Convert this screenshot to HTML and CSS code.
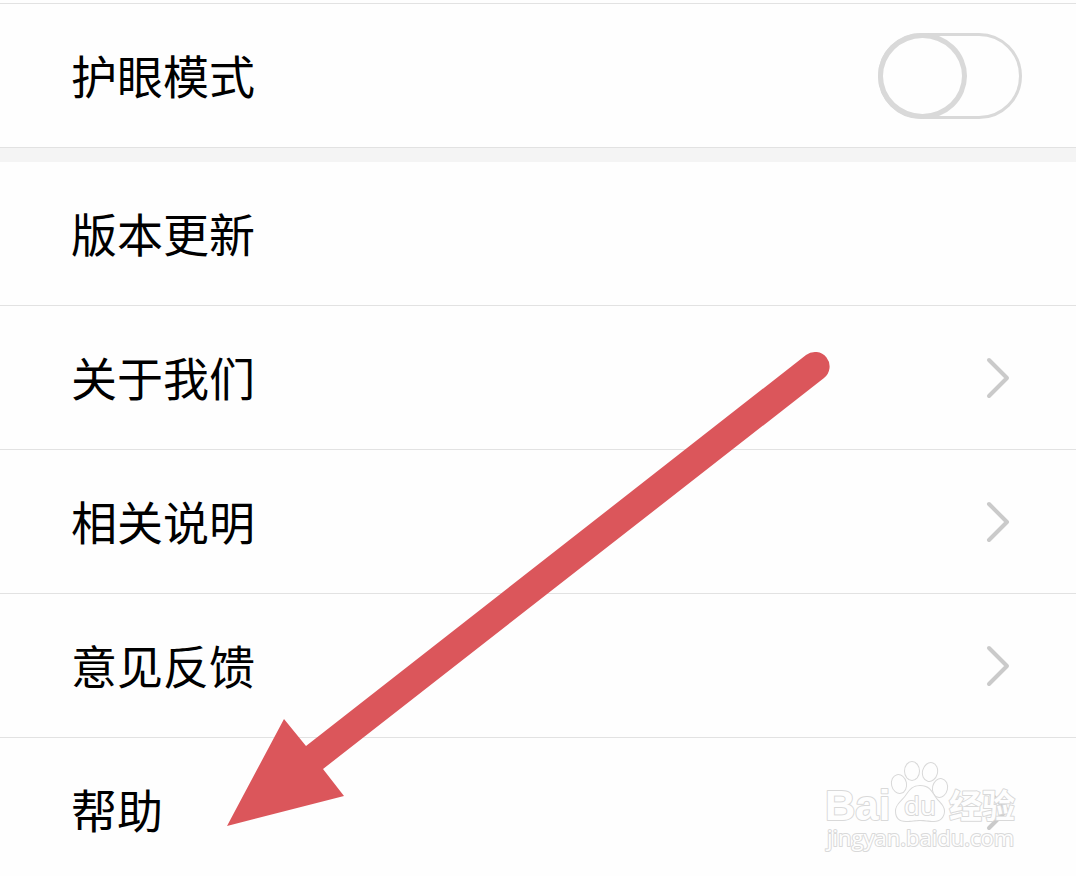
FILE: index.html
```
<!DOCTYPE html>
<html lang="zh-CN">
<head>
    <meta charset="UTF-8">
    <meta name="viewport" content="width=device-width, initial-scale=1.0">
    <title>设置</title>
    <link rel="stylesheet" href="styles.css">
</head>
<body>
    <main class="settings">
        <section class="group">
            <div class="row">
                <label for="eyeMode">护眼模式</label>
                <input type="checkbox" id="eyeMode" class="switch">
            </div>
        </section>

        <section class="group">
            <a href="#update" class="row">版本更新</a>
            <a href="#about" class="row">关于我们
                <svg class="chevron" viewBox="0 0 24 42" aria-hidden="true"><path d="M3 3L21 21L3 39"/></svg>
            </a>
            <a href="#notes" class="row">相关说明
                <svg class="chevron" viewBox="0 0 24 42" aria-hidden="true"><path d="M3 3L21 21L3 39"/></svg>
            </a>
            <a href="#feedback" class="row">意见反馈
                <svg class="chevron" viewBox="0 0 24 42" aria-hidden="true"><path d="M3 3L21 21L3 39"/></svg>
            </a>
            <a href="#help" class="row">帮助
                <svg class="chevron" viewBox="0 0 24 42" aria-hidden="true"><path d="M3 3L21 21L3 39"/></svg>
            </a>
        </section>

        <!-- Arrow pointing at the help row -->
        <svg class="arrow" viewBox="220 345 620 490" aria-hidden="true">
            <path d="M227 826L284 719L306 746L806 355A14.500 14.500 0 0 1 824 378L323 769L344 796Z"/>
        </svg>

        <!-- Baidu watermark -->
        <svg class="watermark" viewBox="820 755 204 105">
            <text class="wm-bai" x="825" y="820">Bai</text>
            <g>
                <ellipse cx="899" cy="784" rx="7" ry="9" transform="rotate(-12 899 784)"/>
                <ellipse cx="912" cy="771" rx="7" ry="9"/>
                <ellipse cx="930" cy="772" rx="7" ry="9" transform="rotate(14 930 772)"/>
                <ellipse cx="940" cy="788" rx="7" ry="9" transform="rotate(12 940 788)"/>
                <path d="M920 786C911 786 909 792 905 797C901 802 896 805 896 811C896 818 900 821 906 821C912 821 915 820 920 820C925 820 928 821 934 821C940 821 944 817 944 811C944 805 938 802 935 797C931 791 929 786 920 786Z"/>
            </g>
            <text class="wm-du" x="904" y="815">du</text>
            <text class="wm-cn" x="949" y="818">经验</text>
            <text class="wm-url" x="827" y="846">jingyan.baidu.com</text>
        </svg>
    </main>
</body>
</html>
```

FILE: styles.css
```
body {
    margin: 0;
    padding-top: 3px;
    background-color: #fefefe;
    color: #000;
    font-family: "Noto Sans CJK SC", sans-serif;
}
.settings {
    position: relative;
}
.group {
    border-top: 1px solid #e2e2e2;
}
.group + .group {
    border-top: 14px solid #f4f4f4;
}
.row {
    display: flex;
    align-items: center;
    justify-content: space-between;
    padding: 37px 66px 40px 71px;
    border-bottom: 1px solid #e2e2e2;
    color: inherit;
    font-size: 46px;
    line-height: 66px;
    text-decoration: none;
}
.group + .group .row:last-child {
    padding-bottom: 34px;
    border-bottom: none;
}
.switch {
    appearance: none;
    box-sizing: border-box;
    width: 144px;
    height: 86px;
    margin: -8px -12px -12px 0;
    border: 3px solid #d9d9d9;
    border-radius: 43px;
    background-color: #fefefe;
    cursor: pointer;
}
.switch::before {
    content: "";
    display: block;
    box-sizing: border-box;
    width: 89px;
    height: 86px;
    margin: -3px;
    border: 5px solid #d9d9d9;
    border-radius: 50%;
}
.switch:checked::before {
    margin-left: 52px;
}
.chevron {
    width: 24px;
    height: 42px;
    margin-top: 4px;
    fill: none;
    stroke: #cacaca;
    stroke-width: 4;
    stroke-linecap: round;
    stroke-linejoin: round;
}
.arrow {
    position: absolute;
    left: 220px;
    top: 342px;
    width: 620px;
    height: 490px;
    fill: #db565b;
    pointer-events: none;
}
.watermark {
    position: absolute;
    right: 52px;
    top: 752px;
    width: 204px;
    height: 105px;
    fill: #fefefe;
    stroke: #d9d9d9;
    stroke-width: 2;
    stroke-linejoin: round;
    paint-order: stroke;
    pointer-events: none;
}
.wm-bai {
    font: bold 42px "Liberation Sans", sans-serif;
}
.wm-du {
    font: 26px "Open Sans", sans-serif;
}
.wm-cn {
    font: bold 33px "Noto Sans CJK SC", sans-serif;
}
.wm-url {
    font: 22px "Open Sans", sans-serif;
}
```
